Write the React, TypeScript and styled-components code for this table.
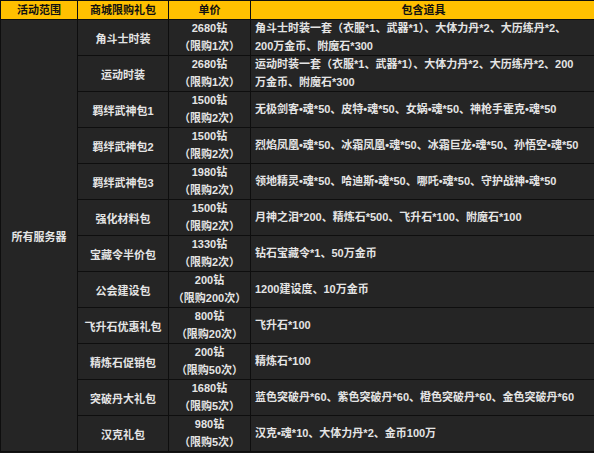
import React from "react";
import styled, { createGlobalStyle } from "styled-components";

const Global = createGlobalStyle`
  html, body { margin: 0; padding: 0; background: #141414; }
  body { font-family: "Liberation Sans", "Noto Sans CJK SC", sans-serif; }
`;

const Table = styled.table`
  border-collapse: collapse;
  table-layout: fixed;
  width: 593px;
  font-size: 11px;
  font-weight: bold;
  color: #e4e4e4;
  background: #252525;
`;

const HeadCell = styled.th<{ $w: number }>`
  width: ${(p) => p.$w}px;
  height: 18px;
  padding: 0;
  background: #ffc000;
  color: #111;
  font-size: 11px;
  font-weight: bold;
  line-height: 18px;
  text-align: center;
  border: 1px solid #0e0e0e;
`;

const BodyRow = styled.tr`
  height: 36px;
`;

const Cell = styled.td<{ $left?: boolean }>`
  height: 35px;
  padding: 0 ${(p) => (p.$left ? "4px" : "0")};
  text-align: ${(p) => (p.$left ? "left" : "center")};
  vertical-align: middle;
  white-space: nowrap;
  overflow: hidden;
  border: 1px solid #0e0e0e;
`;

const Line = styled.div`
  height: 17.5px;
  line-height: 17.5px;
  white-space: nowrap;
`;

type Row = { name: string; price: string; limit: string; items: string[] };

const rows: Row[] = [
  { name: "角斗士时装", price: "2680钻", limit: "（限购1次）", items: ["角斗士时装一套（衣服*1、武器*1）、大体力丹*2、大历练丹*2、", "200万金币、附魔石*300"] },
  { name: "运动时装", price: "2680钻", limit: "（限购1次）", items: ["运动时装一套（衣服*1、武器*1）、大体力丹*2、大历练丹*2、200", "万金币、附魔石*300"] },
  { name: "羁绊武神包1", price: "1500钻", limit: "（限购2次）", items: ["无极剑客•魂*50、皮特•魂*50、女娲•魂*50、神枪手霍克•魂*50"] },
  { name: "羁绊武神包2", price: "1500钻", limit: "（限购2次）", items: ["烈焰凤凰•魂*50、冰霜凤凰•魂*50、冰霜巨龙•魂*50、孙悟空•魂*50"] },
  { name: "羁绊武神包3", price: "1980钻", limit: "（限购2次）", items: ["领地精灵•魂*50、哈迪斯•魂*50、哪吒•魂*50、守护战神•魂*50"] },
  { name: "强化材料包", price: "1500钻", limit: "（限购2次）", items: ["月神之泪*200、精炼石*500、飞升石*100、附魔石*100"] },
  { name: "宝藏令半价包", price: "1330钻", limit: "（限购2次）", items: ["钻石宝藏令*1、50万金币"] },
  { name: "公会建设包", price: "200钻", limit: "（限购200次）", items: ["1200建设度、10万金币"] },
  { name: "飞升石优惠礼包", price: "800钻", limit: "（限购20次）", items: ["飞升石*100"] },
  { name: "精炼石促销包", price: "200钻", limit: "（限购50次）", items: ["精炼石*100"] },
  { name: "突破丹大礼包", price: "1680钻", limit: "（限购5次）", items: ["蓝色突破丹*60、紫色突破丹*60、橙色突破丹*60、金色突破丹*60"] },
  { name: "汉克礼包", price: "980钻", limit: "（限购5次）", items: ["汉克•魂*10、大体力丹*2、金币100万"] },
];

export default function App() {
  return (
    <>
      <Global />
      <Table>
        <thead>
          <tr>
            <HeadCell $w={76}>活动范围</HeadCell>
            <HeadCell $w={90}>商城限购礼包</HeadCell>
            <HeadCell $w={81}>单价</HeadCell>
            <HeadCell $w={345}>包含道具</HeadCell>
          </tr>
        </thead>
        <tbody>
          {rows.map((r, i) => (
            <BodyRow key={r.name}>
              {i === 0 && <Cell rowSpan={rows.length}>所有服务器</Cell>}
              <Cell>{r.name}</Cell>
              <Cell>
                <Line>{r.price}</Line>
                <Line>{r.limit}</Line>
              </Cell>
              <Cell $left>
                {r.items.map((t) => (
                  <Line key={t}>{t}</Line>
                ))}
              </Cell>
            </BodyRow>
          ))}
        </tbody>
      </Table>
    </>
  );
}
